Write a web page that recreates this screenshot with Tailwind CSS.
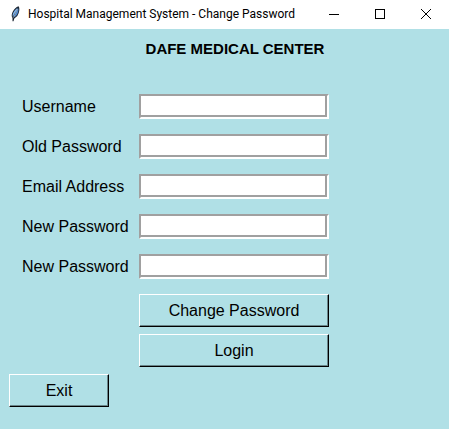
<!DOCTYPE html>
<html lang="en">
<head>
<meta charset="utf-8">
<meta name="viewport" content="width=device-width, initial-scale=1">
<title>Hospital Management System - Change Password</title>
<script src="https://cdn.jsdelivr.net/npm/@tailwindcss/browser@4"></script>
</head>
<body class="flex min-h-screen flex-col bg-[#b0e0e6] font-['Liberation_Sans',Arial,sans-serif] text-base text-black">
  <header class="flex h-[29px] items-center bg-white pb-[2px] pl-2">
    <svg class="h-4 w-4 shrink-0" viewBox="0 0 16 16" aria-hidden="true">
      <path d="M10.500 .3 C12 2 11.500 6.500 9.300 10 L6.300 12.500 L5.500 15.300 H4.500 L4.500 12 C2 8.500 6 2 10.500 .3Z" fill="#1b2430"/>
      <path d="M9.800 1.800 C7 3.500 3.800 7.500 4.800 10.700 L8.200 5Z" fill="#7fb4ee"/>
      <path d="M10.300 2.200 C11 5 9.700 8 7.700 10.300 L6 11.200 Z" fill="#4a86d0"/>
      <path d="M9.500 3 L5.500 11.500" stroke="#c3e0fb" stroke-width=".7"/>
    </svg>
    <span class="ml-1 flex-1 whitespace-nowrap font-['Roboto','Noto_Sans',sans-serif] text-[12px] leading-4">Hospital Management System - Change Password</span>
    <div class="flex">
      <button type="button" aria-label="Minimize" class="flex h-[27px] w-[46px] items-center justify-center">
        <svg class="h-[10px] w-[10px]" viewBox="0 0 10 10" shape-rendering="crispEdges"><path d="M0 5h10v1H0z"/></svg>
      </button>
      <button type="button" aria-label="Maximize" class="flex h-[27px] w-[46px] items-center justify-center">
        <svg class="h-[10px] w-[10px]" viewBox="0 0 10 10" shape-rendering="crispEdges"><path d="M.5.5h9v9h-9z" fill="none" stroke="#000"/></svg>
      </button>
      <button type="button" aria-label="Close" class="flex h-[27px] w-[46px] items-center justify-center">
        <svg class="h-[10px] w-[10px]" viewBox="0 0 10 10"><path d="M0 0l10 10M10 0L0 10" fill="none" stroke="#000"/></svg>
      </button>
    </div>
  </header>
  <main class="pt-[10px] pr-[120px] pl-[9px]">
    <form class="grid auto-rows-[40px] grid-cols-[130px_minmax(0,1fr)]">
      <h1 class="col-start-2 mb-[15px] h-10 whitespace-nowrap pl-[2px] text-center text-[15px] leading-5 font-bold">DAFE MEDICAL CENTER</h1>

      <label for="username" class="col-start-1 mt-[15px] pl-[13px] leading-[25px] whitespace-nowrap">Username</label>
      <input id="username" type="text" class="mt-[15px] h-[25px] w-full border-2 border-t-[#a0a0a0] border-r-white border-b-white border-l-[#a0a0a0] bg-white px-1 shadow-[inset_-2px_-2px_0_#a0a0a0] outline-none">

      <label for="old-password" class="mt-[15px] pl-[13px] leading-[25px] whitespace-nowrap">Old Password</label>
      <input id="old-password" type="password" class="mt-[15px] h-[25px] w-full border-2 border-t-[#a0a0a0] border-r-white border-b-white border-l-[#a0a0a0] bg-white px-1 shadow-[inset_-2px_-2px_0_#a0a0a0] outline-none">

      <label for="email" class="mt-[15px] pl-[13px] leading-[25px] whitespace-nowrap">Email Address</label>
      <input id="email" type="email" class="mt-[15px] h-[25px] w-full border-2 border-t-[#a0a0a0] border-r-white border-b-white border-l-[#a0a0a0] bg-white px-1 shadow-[inset_-2px_-2px_0_#a0a0a0] outline-none">

      <label for="new-password" class="mt-[15px] pl-[13px] leading-[25px] whitespace-nowrap">New Password</label>
      <input id="new-password" type="password" class="mt-[15px] h-[25px] w-full border-2 border-t-[#a0a0a0] border-r-white border-b-white border-l-[#a0a0a0] bg-white px-1 shadow-[inset_-2px_-2px_0_#a0a0a0] outline-none">

      <label for="confirm-password" class="mt-[15px] pl-[13px] leading-[25px] whitespace-nowrap">New Password</label>
      <input id="confirm-password" type="password" class="mt-[15px] h-[25px] w-full border-2 border-t-[#a0a0a0] border-r-white border-b-white border-l-[#a0a0a0] bg-white px-1 shadow-[inset_-2px_-2px_0_#a0a0a0] outline-none">

      <button type="submit" class="col-start-2 mt-[15px] h-[33px] border border-t-white border-r-black border-b-black border-l-white shadow-[inset_-1px_-1px_0_#69868a]">Change Password</button>
      <button type="button" class="col-start-2 mt-[15px] h-[33px] border border-t-white border-r-black border-b-black border-l-white shadow-[inset_-1px_-1px_0_#69868a]">Login</button>
      <button type="button" class="col-start-1 mt-[15px] h-[33px] w-[100px] border border-t-white border-r-black border-b-black border-l-white shadow-[inset_-1px_-1px_0_#69868a]">Exit</button>
    </form>
  </main>
</body>
</html>
